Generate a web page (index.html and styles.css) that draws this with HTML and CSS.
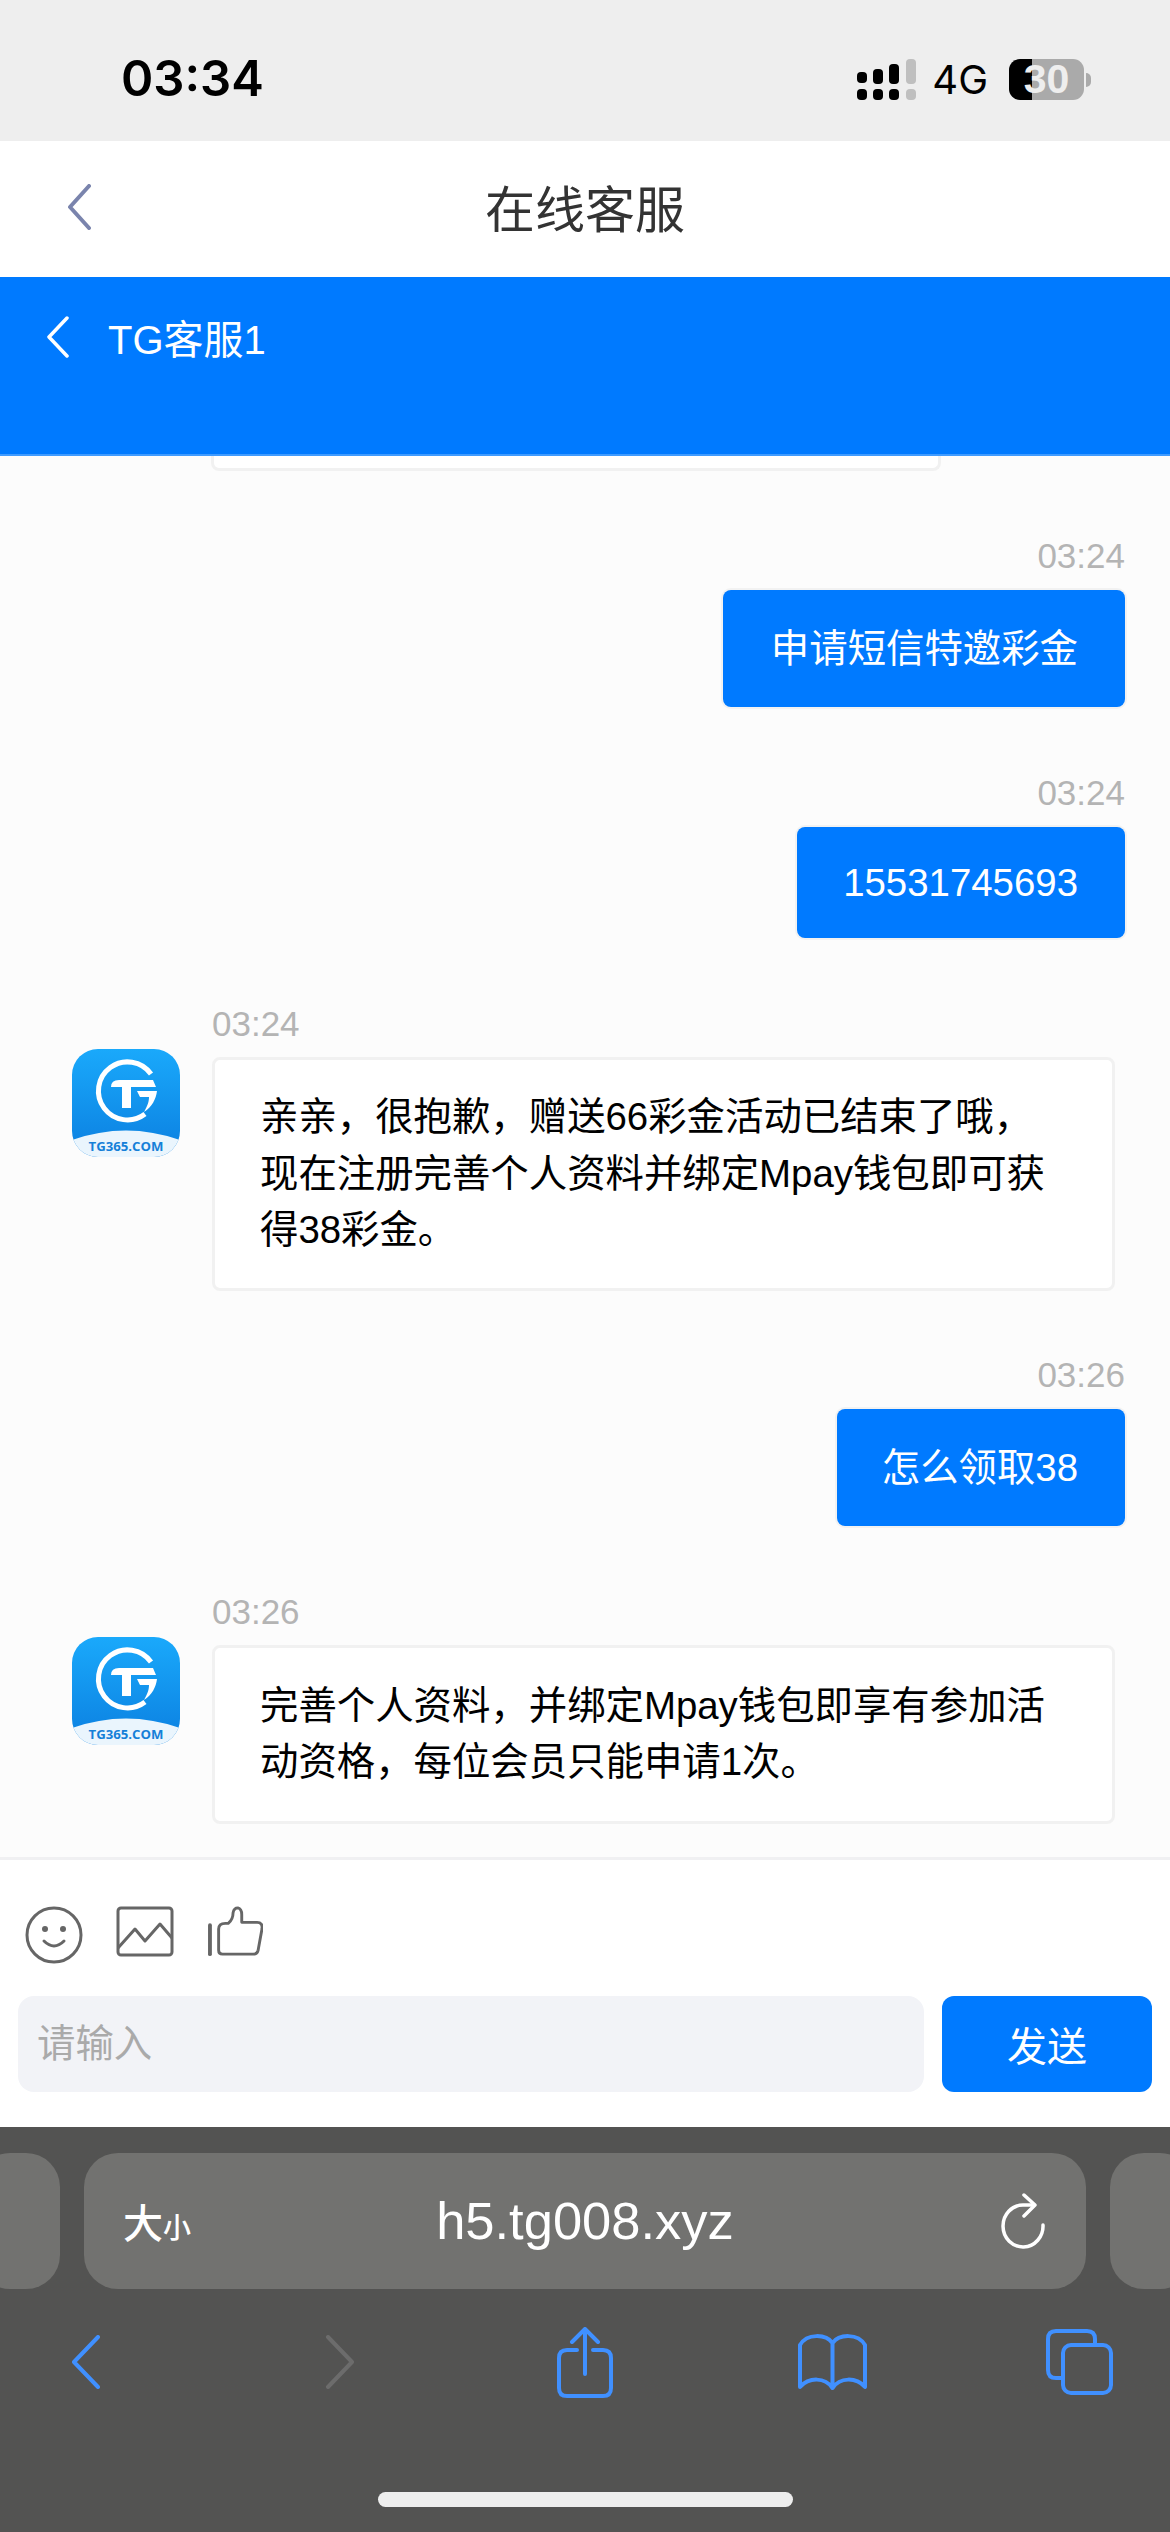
FILE: index.html
```html
<!DOCTYPE html>
<html lang="zh-CN">
<head>
    <meta charset="UTF-8">
    <meta name="viewport" content="width=device-width, initial-scale=1.0">
    <title>在线客服</title>
    <link rel="stylesheet" href="styles.css">
</head>
<body>

    <header class="status-bar">
        <span class="clock">03:34</span>
        <div class="status-right">
            <svg class="signal" width="59" height="41" viewBox="0 0 59 41">
                <g fill="#000">
                    <rect x="0" y="13" width="10" height="11" rx="4"/>
                    <rect x="16" y="10" width="10" height="15" rx="4"/>
                    <rect x="32" y="5" width="10" height="20" rx="4"/>
                    <rect x="0" y="30" width="10" height="11" rx="4"/>
                    <rect x="16" y="30" width="10" height="11" rx="4"/>
                    <rect x="32" y="30" width="10" height="11" rx="4"/>
                </g>
                <g fill="#bfbfbf">
                    <rect x="49" y="0" width="10" height="25" rx="4"/>
                    <rect x="49" y="30" width="10" height="11" rx="4"/>
                </g>
            </svg>
            <span class="network">4G</span>
            <div class="battery">30</div>
            <div class="battery-nub"></div>
        </div>
    </header>

    <nav class="nav-bar">
        <svg class="nav-back" width="24" height="46" viewBox="0 0 24 46">
            <path d="M22 2 L3 23 L22 44" fill="none" stroke="#7a84ad" stroke-width="4" stroke-linecap="round" stroke-linejoin="round"/>
        </svg>
        <h1 class="nav-title">在线客服</h1>
    </nav>

    <div class="chat-head">
        <svg width="23" height="42" viewBox="0 0 23 42">
            <path d="M21 2 L3 21 L21 40" fill="none" stroke="#fff" stroke-width="3.5" stroke-linecap="round" stroke-linejoin="round"/>
        </svg>
        <span class="chat-name">TG客服1</span>
    </div>

    <main class="chat">
        <div class="stub"></div>

        <div class="msg msg-me">
            <div class="time">03:24</div>
            <div class="bubble">申请短信特邀彩金</div>
        </div>

        <div class="msg msg-me">
            <div class="time">03:24</div>
            <div class="bubble bubble-num">15531745693</div>
        </div>

        <div class="msg msg-them">
            <svg class="avatar" width="108" height="108" viewBox="0 0 108 108">
                <defs>
                    <linearGradient id="tile1" x1="0" y1="0" x2="0" y2="1">
                        <stop offset="0" stop-color="#1aa9fb"/>
                        <stop offset="1" stop-color="#0b7fe0"/>
                    </linearGradient>
                    <clipPath id="clip1"><rect width="108" height="108" rx="26"/></clipPath>
                </defs>
                <g clip-path="url(#clip1)">
                    <rect width="108" height="108" fill="url(#tile1)"/>
                    <path d="M0 91 Q54 72 108 91 V108 H0 Z" fill="#eaf5fd"/>
                </g>
                <path d="M79 25 A29 29 0 1 0 73 65" fill="none" stroke="#fff" stroke-width="5"/>
                <path d="M39 38 Q39 31 47 31 H81 L84 38 H59 V59 H50 V38 Z" fill="#fff"/>
                <path d="M65 42 H85 C84 50 80 58 72 63 C76 56 77 52 77 48 H68 Z" fill="#fff"/>
                <text class="avatar-text" x="54" y="102" text-anchor="middle">TG365.COM</text>
            </svg>
            <div class="msg-body">
                <div class="time">03:24</div>
                <div class="bubble bubble-long">亲亲，很抱歉，赠送66彩金活动已结束了哦，现在注册完善个人资料并绑定Mpay钱包即可获得38彩金。</div>
            </div>
        </div>

        <div class="msg msg-me">
            <div class="time">03:26</div>
            <div class="bubble bubble-short">怎么领取38</div>
        </div>

        <div class="msg msg-them">
            <svg class="avatar" width="108" height="108" viewBox="0 0 108 108">
                <defs>
                    <linearGradient id="tile2" x1="0" y1="0" x2="0" y2="1">
                        <stop offset="0" stop-color="#1aa9fb"/>
                        <stop offset="1" stop-color="#0b7fe0"/>
                    </linearGradient>
                    <clipPath id="clip2"><rect width="108" height="108" rx="26"/></clipPath>
                </defs>
                <g clip-path="url(#clip2)">
                    <rect width="108" height="108" fill="url(#tile2)"/>
                    <path d="M0 91 Q54 72 108 91 V108 H0 Z" fill="#eaf5fd"/>
                </g>
                <path d="M79 25 A29 29 0 1 0 73 65" fill="none" stroke="#fff" stroke-width="5"/>
                <path d="M39 38 Q39 31 47 31 H81 L84 38 H59 V59 H50 V38 Z" fill="#fff"/>
                <path d="M65 42 H85 C84 50 80 58 72 63 C76 56 77 52 77 48 H68 Z" fill="#fff"/>
                <text class="avatar-text" x="54" y="102" text-anchor="middle">TG365.COM</text>
            </svg>
            <div class="msg-body">
                <div class="time">03:26</div>
                <div class="bubble bubble-long bubble-two">完善个人资料，并绑定Mpay钱包即享有参加活动资格，每位会员只能申请1次。</div>
            </div>
        </div>
    </main>

    <footer class="composer">
        <div class="tools">
            <svg width="58" height="58" viewBox="0 0 58 58" fill="none" stroke="#666" stroke-width="3">
                <circle cx="29" cy="29" r="27"/>
                <circle cx="20" cy="23" r="3" fill="#666" stroke="none"/>
                <circle cx="38" cy="23" r="3" fill="#666" stroke="none"/>
                <path d="M19 35 Q29 45 39 35" stroke-linecap="round"/>
            </svg>
            <svg width="58" height="52" viewBox="0 0 58 52" fill="none" stroke="#666" stroke-width="3">
                <rect x="2" y="2" width="54" height="47" rx="3"/>
                <path d="M2 42 L19 23 L29 35 L44 18 L56 32" stroke-linejoin="round"/>
            </svg>
            <svg width="56" height="52" viewBox="0 0 58 54" fill="none" stroke="#666" stroke-width="3" stroke-linecap="round" stroke-linejoin="round">
                <path d="M3 20 V50" stroke-width="4"/>
                <path d="M12 24 Q12 18 19 18 H22 Q27 14 27 7 Q28 2 32 2 Q36 3 36 9 V17 H52 Q58 17 57 24 L53 46 Q52 50 48 50 H16 Q12 50 12 46 Z"/>
            </svg>
        </div>
        <div class="input-row">
            <input class="input" type="text" placeholder="请输入">
            <button class="send">发送</button>
        </div>
    </footer>

    <section class="safari">
        <div class="url-row">
            <div class="pill pill-side"></div>
            <div class="pill pill-main">
                <span class="text-size">大<small>小</small></span>
                <span class="url">h5.tg008.xyz</span>
                <svg width="46" height="56" viewBox="0 0 46 56" fill="none" stroke="#fff" stroke-width="3.5" stroke-linecap="round" stroke-linejoin="round">
                    <path d="M43 32 A20 21 0 1 1 23 12 H32"/>
                    <path d="M24 2 L35 12 L24 23"/>
                </svg>
            </div>
            <div class="pill pill-side"></div>
        </div>
        <div class="toolbar">
            <svg width="30" height="54" viewBox="0 0 30 54" fill="none" stroke="#4090ff" stroke-width="4" stroke-linecap="round" stroke-linejoin="round">
                <path d="M27 2 L3 27 L27 52"/>
            </svg>
            <svg width="30" height="54" viewBox="0 0 30 54" fill="none" stroke="#6c6c6c" stroke-width="4" stroke-linecap="round" stroke-linejoin="round">
                <path d="M3 2 L27 27 L3 52"/>
            </svg>
            <svg width="56" height="71" viewBox="0 0 56 71" fill="none" stroke="#4090ff" stroke-width="4" stroke-linecap="round" stroke-linejoin="round">
                <path d="M20 23 H10 Q2 23 2 31 V61 Q2 69 10 69 H46 Q54 69 54 61 V31 Q54 23 46 23 H36"/>
                <path d="M28 47 V3"/>
                <path d="M15 15 L28 2 L41 15"/>
            </svg>
            <svg width="71" height="58" viewBox="0 0 71 58" fill="none" stroke="#4090ff" stroke-width="4" stroke-linecap="round" stroke-linejoin="round">
                <path d="M35.5 10 C29 1 10 0 3 12 V54 C12 44 28 44 35.5 55 C43 44 59 44 68 54 V12 C61 0 42 1 35.5 10 V55"/>
            </svg>
            <svg width="67" height="66" viewBox="0 0 67 66" fill="none" stroke="#4090ff" stroke-width="4" stroke-linejoin="round">
                <path d="M15 49 H10 Q2 49 2 41 V10 Q2 2 10 2 H41 Q49 2 49 10 V14"/>
                <rect x="17" y="16" width="48" height="48" rx="8"/>
            </svg>
        </div>
        <div class="home-row">
            <div class="home-bar"></div>
        </div>
    </section>

</body>
</html>
```

FILE: styles.css
```css
* {
    box-sizing: border-box;
}

body {
    font-family: "Liberation Sans", "Noto Sans CJK SC", sans-serif;
    width: 1170px;
    height: 2532px;
    margin: 0;
    padding: 0;
    overflow: hidden;
    display: flex;
    flex-direction: column;
    background-color: #fcfcfc;
}

/* status bar */
.status-bar {
    height: 141px;
    flex: none;
    padding: 57px 79px 0 121px;
    background-color: #eeeeee;
    display: flex;
    justify-content: space-between;
    align-items: flex-start;
}

.clock {
    font-family: Inter, sans-serif;
    font-weight: 600;
    font-size: 49px;
    line-height: 43px;
    color: #000;
}

.status-right {
    display: flex;
    align-items: center;
}

.network {
    font-family: Inter, sans-serif;
    font-size: 40px;
    line-height: 45px;
    margin: 0 21px 0 16px;
    color: #000;
}

.battery {
    width: 75px;
    height: 41px;
    border-radius: 11px;
    background: linear-gradient(to right, #000 23px, #aaaaaa 23px);
    text-align: center;
    font-weight: bold;
    font-size: 41px;
    line-height: 41px;
    color: #eeeeee;
}

.battery-nub {
    width: 5px;
    height: 14px;
    margin-left: 2px;
    border-radius: 0 7px 7px 0;
    background-color: #aaaaaa;
}

/* page title */
.nav-bar {
    height: 136px;
    flex: none;
    padding-bottom: 7px;
    background-color: #fff;
    position: relative;
    display: flex;
    align-items: center;
    justify-content: center;
}

.nav-back {
    position: absolute;
    left: 67px;
    top: 43px;
}

.nav-title {
    margin: 0;
    font-size: 50px;
    font-weight: normal;
    color: #333;
}

.chat-head {
    height: 179px;
    flex: none;
    padding: 39px 0 0 46px;
    background-color: #007aff;
    border-bottom: 2px solid #3f9bff;
    display: flex;
    align-items: flex-start;
    gap: 39px;
}

.chat-name {
    font-size: 40px;
    line-height: 48px;
    color: #fff;
}

/* messages */
.chat {
    flex: 1;
    min-height: 0;
    overflow: hidden;
    background-color: #fcfcfc;
}

.stub {
    width: 730px;
    height: 15px;
    margin: 0 0 65px 211px;
    background-color: #fff;
    border: 3px solid #f1f1f1;
    border-top: none;
    border-radius: 0 0 8px 8px;
}

.msg {
    margin-bottom: 66px;
}

.msg-me {
    padding-right: 45px;
    display: flex;
    flex-direction: column;
    align-items: flex-end;
}

.msg-them {
    margin-bottom: 64px;
    padding-left: 72px;
    display: flex;
    gap: 32px;
}

.avatar {
    flex: none;
    margin-top: 45px;
}

.avatar-text {
    font-family: "Open Sans", sans-serif;
    font-weight: bold;
    font-size: 13.2px;
    fill: #1580d8;
}

.msg-body {
    width: 903px;
}

.time {
    font-size: 35px;
    line-height: 40px;
    margin-bottom: 14px;
    color: #b4b4b4;
}

.msg-them .time {
    margin-bottom: 13px;
}

.bubble {
    font-size: 38.4px;
    line-height: 57px;
    padding: 30px 47px 30px 48px;
    border-radius: 8px;
    background-color: #007aff;
    box-shadow: 0 0 0 2px #f2f2f2;
    color: #fff;
}

.bubble-num {
    padding-top: 27px;
    padding-bottom: 27px;
    padding-left: 46px;
}

.bubble-short {
    padding-left: 45px;
}

.bubble-long {
    line-height: 56.5px;
    padding: 29px 45px;
    background-color: #fff;
    border: 3px solid #f1f1f1;
    box-shadow: none;
    color: #000;
}

.bubble-two {
    padding-top: 30px;
    padding-bottom: 30px;
}

/* input area */
.composer {
    height: 270px;
    flex: none;
    padding: 46px 18px 0;
    background-color: #fff;
    border-top: 3px solid #f0f0f2;
}

.tools {
    height: 90px;
    padding-left: 7px;
    display: flex;
    align-items: flex-start;
    gap: 33px;
}

.input-row {
    display: flex;
    gap: 18px;
}

.input {
    flex: 1;
    height: 96px;
    padding: 0 19px;
    border: none;
    border-radius: 16px;
    background-color: #f2f3f7;
    font-family: inherit;
    font-size: 38.4px;
}

.input::placeholder {
    color: #aaaaaa;
}

.send {
    width: 210px;
    height: 96px;
    padding: 0;
    border: none;
    border-radius: 12px;
    background-color: #007aff;
    font-family: inherit;
    font-size: 40px;
    color: #fff;
}

/* browser chrome */
.safari {
    height: 405px;
    flex: none;
    padding-top: 26px;
    background-color: #535352;
}

.url-row {
    height: 136px;
    display: flex;
    gap: 24px;
    margin: 0 -24px;
}

.pill {
    height: 136px;
    border-radius: 34px;
    background-color: #727270;
}

.pill-side {
    width: 84px;
    flex: none;
}

.pill-main {
    flex: 1;
    position: relative;
    padding: 0 40px 0 39px;
    display: flex;
    align-items: center;
    justify-content: space-between;
}

.text-size {
    font-size: 40px;
    font-weight: 500;
    color: #fff;
}

.text-size small {
    font-size: 28px;
}

.url {
    font-size: 52.5px;
    line-height: 60px;
    color: #fff;
    position: absolute;
    left: 0;
    right: 0;
    text-align: center;
}

.toolbar {
    height: 146px;
    display: grid;
    grid-template-columns: 172px 336px 154px 340px 154px;
    justify-items: center;
    align-items: center;
}

.home-row {
    padding-top: 57px;
    display: flex;
    justify-content: center;
}

.home-bar {
    width: 415px;
    height: 15px;
    border-radius: 8px;
    background-color: #eeeeee;
}
```
